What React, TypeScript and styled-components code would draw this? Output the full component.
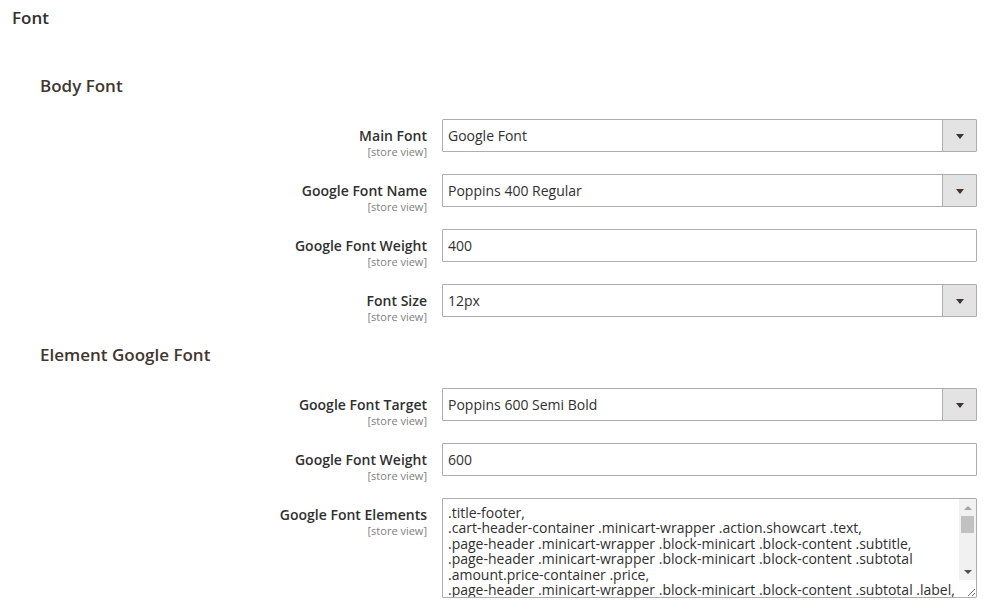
import React from "react";
import styled, { createGlobalStyle } from "styled-components";

const GlobalStyle = createGlobalStyle`
  html, body {
    margin: 0;
    padding: 0;
    background: #ffffff;
  }
  body {
    font-family: "Open Sans", "DejaVu Sans", sans-serif;
    color: #303030;
  }
  * {
    box-sizing: border-box;
  }
`;

const Page = styled.div`
  width: 996px;
  padding: 8px 19px 0 12px;
`;

const PanelTitle = styled.div`
  font-size: 17px;
  font-weight: 600;
  line-height: 20px;
  color: #303030;
`;

const Fieldset = styled.div<{ $first?: boolean }>`
  padding-left: 28px;
  margin-top: ${(p) => (p.$first ? "48px" : "28px")};
`;

const Legend = styled.div`
  font-size: 17px;
  font-weight: 600;
  line-height: 20px;
  color: #41362f;
  margin-bottom: 23px;
`;

const Row = styled.div`
  display: grid;
  grid-template-columns: 387px 1fr;
  column-gap: 15px;
  align-items: start;
  margin-bottom: 22px;
`;

const LabelCell = styled.div`
  height: 33px;
  text-align: right;
  padding-top: 8px;
`;

const LabelText = styled.div`
  font-size: 14px;
  font-weight: 600;
  line-height: 18px;
  color: #303030;
`;

const Scope = styled.div`
  font-size: 11px;
  line-height: 13px;
  color: #808080;
`;

const TextInput = styled.input`
  display: block;
  width: 100%;
  height: 33px;
  border: 1px solid #adadad;
  border-radius: 1px;
  padding: 0 5px;
  font-family: "Open Sans", "DejaVu Sans", sans-serif;
  font-size: 14px;
  color: #303030;
  background: #ffffff;
  outline: none;
`;

const SelectBox = styled.div`
  display: flex;
  height: 33px;
  border: 1px solid #adadad;
  border-radius: 1px;
  background: #ffffff;
`;

const SelectValue = styled.div`
  flex: 1;
  display: flex;
  align-items: center;
  padding: 0 5px;
  font-size: 14px;
  color: #303030;
`;

const SelectButton = styled.div`
  width: 34px;
  border-left: 1px solid #adadad;
  background: #e3e3e3;
  display: flex;
  align-items: center;
  justify-content: center;
`;

const Caret = styled.span`
  width: 0;
  height: 0;
  border-left: 4px solid transparent;
  border-right: 4px solid transparent;
  border-top: 5px solid #41362f;
  margin-top: 1px;
`;

const AreaWrap = styled.div`
  position: relative;
`;

const TextArea = styled.textarea`
  display: block;
  width: 100%;
  height: 100px;
  border: 1px solid #adadad;
  border-radius: 1px;
  padding: 6px 22px 6px 5px;
  font-family: "Open Sans", "DejaVu Sans", sans-serif;
  font-size: 14px;
  line-height: 15.4px;
  color: #303030;
  background: #ffffff;
  resize: vertical;
  outline: none;
  white-space: pre;
  overflow: hidden;
`;

/* fake classic scrollbar drawn over the textarea's right edge */
const ScrollRail = styled.div`
  position: absolute;
  top: 1px;
  right: 1px;
  bottom: 18px;
  width: 17px;
  background: #f1f1f1;
  display: flex;
  flex-direction: column;
  pointer-events: none;
`;

const ScrollArrow = styled.div<{ $dir: "up" | "down"; $active?: boolean }>`
  height: 17px;
  display: flex;
  align-items: center;
  justify-content: center;

  &::before {
    content: "";
    width: 0;
    height: 0;
    border-left: 4px solid transparent;
    border-right: 4px solid transparent;
    ${(p) =>
      p.$dir === "up"
        ? `border-bottom: 4px solid ${p.$active ? "#505050" : "#a3a3a3"};`
        : `border-top: 4px solid ${p.$active ? "#505050" : "#a3a3a3"};`}
  }
`;

const ScrollTrack = styled.div`
  flex: 1;
  padding: 0 2px;
`;

const ScrollThumb = styled.div`
  height: 17px;
  background: #c1c1c1;
`;

type Field = {
  label: string;
  kind: "select" | "input" | "textarea";
  value: string;
};

const elementsValue = [
  ".title-footer,",
  ".cart-header-container .minicart-wrapper .action.showcart .text,",
  ".page-header .minicart-wrapper .block-minicart .block-content .subtitle,",
  ".page-header .minicart-wrapper .block-minicart .block-content .subtotal",
  ".amount.price-container .price,",
  ".page-header .minicart-wrapper .block-minicart .block-content .subtotal .label,",
  ".page-header .minicart-wrapper .block-minicart .block-content .actions",
  ".primary .action,",
  ".product-item-name,",
  ".product-info-main .page-title-wrapper .page-title,",
  ".block-title strong,",
  ".filter-options-title,",
  ".sidebar .block .block-title strong,",
  ".footer .footer-title,",
  ".navigation .level0 > .level-top,",
  ".price-box .price,",
  ".action.primary",
].join("\n");

const bodyFields: Field[] = [
  { label: "Main Font", kind: "select", value: "Google Font" },
  { label: "Google Font Name", kind: "select", value: "Poppins 400 Regular" },
  { label: "Google Font Weight", kind: "input", value: "400" },
  { label: "Font Size", kind: "select", value: "12px" },
];

const elementFields: Field[] = [
  { label: "Google Font Target", kind: "select", value: "Poppins 600 Semi Bold" },
  { label: "Google Font Weight", kind: "input", value: "600" },
  { label: "Google Font Elements", kind: "textarea", value: elementsValue },
];

const Control: React.FC<{ field: Field }> = ({ field }) => {
  if (field.kind === "select") {
    return (
      <SelectBox>
        <SelectValue>{field.value}</SelectValue>
        <SelectButton>
          <Caret />
        </SelectButton>
      </SelectBox>
    );
  }
  if (field.kind === "input") {
    return <TextInput type="text" defaultValue={field.value} />;
  }
  return (
    <AreaWrap>
      <TextArea wrap="off" defaultValue={field.value} />
      <ScrollRail>
        <ScrollArrow $dir="up" />
        <ScrollTrack>
          <ScrollThumb />
        </ScrollTrack>
        <ScrollArrow $dir="down" $active />
      </ScrollRail>
    </AreaWrap>
  );
};

const FieldRow: React.FC<{ field: Field }> = ({ field }) => (
  <Row>
    <LabelCell>
      <LabelText>{field.label}</LabelText>
      <Scope>[store view]</Scope>
    </LabelCell>
    <div>
      <Control field={field} />
    </div>
  </Row>
);

export default function App() {
  return (
    <>
      <GlobalStyle />
      <Page>
        <PanelTitle>Font</PanelTitle>

        <Fieldset $first>
          <Legend>Body Font</Legend>
          {bodyFields.map((f) => (
            <FieldRow key={f.label} field={f} />
          ))}
        </Fieldset>

        <Fieldset>
          <Legend>Element Google Font</Legend>
          {elementFields.map((f) => (
            <FieldRow key={f.label} field={f} />
          ))}
        </Fieldset>
      </Page>
    </>
  );
}
